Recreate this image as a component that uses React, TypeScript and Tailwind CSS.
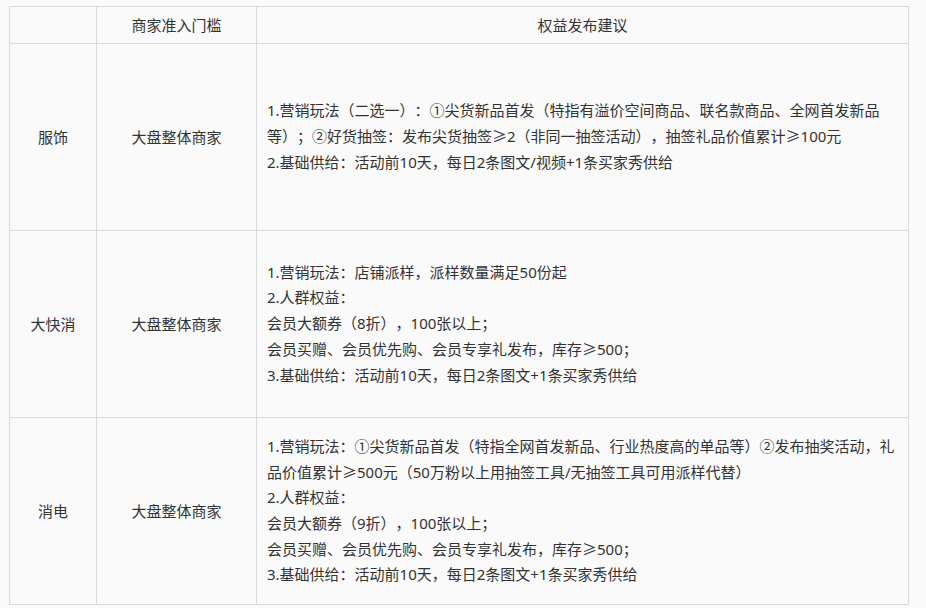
import React from 'react';

const rows = [
  {
    category: '服饰',
    threshold: '大盘整体商家',
    lines: [
      '1.营销玩法（二选一）：①尖货新品首发（特指有溢价空间商品、联名款商品、全网首发新品',
      '等）；②好货抽签：发布尖货抽签≥2（非同一抽签活动），抽签礼品价值累计≥100元',
      '2.基础供给：活动前10天，每日2条图文/视频+1条买家秀供给',
    ],
  },
  {
    category: '大快消',
    threshold: '大盘整体商家',
    lines: [
      '1.营销玩法：店铺派样，派样数量满足50份起',
      '2.人群权益：',
      '会员大额券（8折），100张以上；',
      '会员买赠、会员优先购、会员专享礼发布，库存≥500；',
      '3.基础供给：活动前10天，每日2条图文+1条买家秀供给',
    ],
  },
  {
    category: '消电',
    threshold: '大盘整体商家',
    lines: [
      '1.营销玩法：①尖货新品首发（特指全网首发新品、行业热度高的单品等）②发布抽奖活动，礼',
      '品价值累计≥500元（50万粉以上用抽签工具/无抽签工具可用派样代替）',
      '2.人群权益：',
      '会员大额券（9折），100张以上；',
      '会员买赠、会员优先购、会员专享礼发布，库存≥500；',
      '3.基础供给：活动前10天，每日2条图文+1条买家秀供给',
    ],
  },
];

export default function App() {
  return (
    <div
      className="w-[926px] h-[608px] bg-[#fafafa] text-[#333] text-[15px] pt-[6px] pl-[9px] [text-spacing-trim:space-all]"
      style={{ fontFamily: '"Noto Sans", "Noto Sans CJK SC", sans-serif' }}
    >
      <table className="border-collapse table-fixed w-[899px]">
        <colgroup>
          <col className="w-[87px]" />
          <col className="w-[160px]" />
          <col className="w-[652px]" />
        </colgroup>
        <thead>
          <tr className="h-[37px]">
            <th className="border border-[#d9d9d9] font-normal"></th>
            <th className="border border-[#d9d9d9] font-normal">商家准入门槛</th>
            <th className="border border-[#d9d9d9] font-normal">权益发布建议</th>
          </tr>
        </thead>
        <tbody>
          {rows.map((row) => (
            <tr key={row.category} className="h-[187px]">
              <td className="border border-[#d9d9d9] text-center align-middle">{row.category}</td>
              <td className="border border-[#d9d9d9] text-center align-middle">{row.threshold}</td>
              <td className="border border-[#d9d9d9] align-middle px-[10px] leading-[25.7px]">
                {row.lines.map((line, i) => (
                  <div key={i} className="whitespace-nowrap">
                    {line}
                  </div>
                ))}
              </td>
            </tr>
          ))}
        </tbody>
      </table>
    </div>
  );
}
